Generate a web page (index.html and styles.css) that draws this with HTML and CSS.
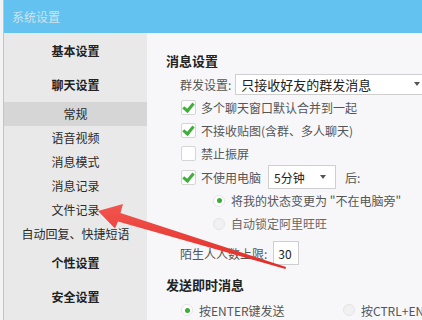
FILE: index.html
```html
<!DOCTYPE html>
<html lang="zh">
<head>
    <meta charset="UTF-8">
    <title>系统设置</title>
    <link rel="stylesheet" href="styles.css">
</head>
<body>

<div class="edge"></div>

<div class="window">
    <div class="titlebar">系统设置</div>

    <div class="main">
        <div class="sidebar">
            <div class="group">基本设置</div>
            <div class="group">聊天设置</div>
            <div class="item active">常规</div>
            <div class="item">语音视频</div>
            <div class="item">消息模式</div>
            <div class="item">消息记录</div>
            <div class="item">文件记录</div>
            <div class="item">自动回复、快捷短语</div>
            <div class="group">个性设置</div>
            <div class="group">安全设置</div>
        </div>

        <div class="content">
            <div class="heading">消息设置</div>

            <div class="row field">
                <span>群发设置:</span>
                <div class="select wide">只接收好友的群发消息<span class="caret"></span></div>
            </div>

            <div class="row check"><span class="box on"></span>多个聊天窗口默认合并到一起</div>
            <div class="row check"><span class="box on"></span>不接收贴图(含群、多人聊天)</div>
            <div class="row check"><span class="box"></span>禁止振屏</div>
            <div class="row check tall">
                <span class="box on"></span>不使用电脑
                <div class="select small">5分钟<span class="caret"></span></div>
                <span class="after">后:</span>
            </div>

            <div class="row radio sub"><span class="dot on"></span>将我的状态变更为 "不在电脑旁"</div>
            <div class="row radio sub faint"><span class="dot"></span>自动锁定阿里旺旺</div>

            <div class="row field limit">
                <span>陌生人人数上限:</span>
                <div class="input">30</div>
            </div>

            <div class="heading second">发送即时消息</div>

            <div class="row radio send">
                <span class="opt"><span class="dot on"></span>按ENTER键发送</span>
                <span class="opt"><span class="dot"></span>按CTRL+ENTER键发送</span>
            </div>
        </div>
    </div>
</div>

<svg class="arrow" width="422" height="320" viewBox="0 0 422 320">
    <defs>
        <linearGradient id="red" x1="0" y1="0" x2="0" y2="1">
            <stop offset="0" stop-color="#f2564f"/>
            <stop offset="1" stop-color="#e02c26"/>
        </linearGradient>
    </defs>
    <polygon points="98,211 123,204 120.5,213 286,267 285.5,269 118,221.5 115,228.5" fill="url(#red)"/>
</svg>

</body>
</html>
```

FILE: styles.css
```css
body {
    margin: 0;
    width: 422px;
    height: 320px;
    overflow: hidden;
    display: flex;
    position: relative;
    font-family: "Noto Sans CJK SC", "Noto Sans", sans-serif;
    font-size: 12px;
    color: #333;
    background-color: #f7f7f9;
}
.edge {
    width: 3px;
    background-color: #f3f3f3;
    border-right: 1px solid #c4c4c4;
}
.window {
    flex: 1;
    display: flex;
    flex-direction: column;
    min-width: 0;
}
.titlebar {
    height: 33px;
    line-height: 33px;
    padding-left: 8px;
    background-color: #63c2ef;
    color: #d0e3ee;
    font-size: 12px;
}
.main {
    flex: 1;
    display: flex;
    min-width: 0;
}
.sidebar {
    width: 143px;
    flex-shrink: 0;
    background-color: #e9e9e9;
    padding-top: 1px;
}
.group {
    height: 34px;
    line-height: 34px;
    text-align: center;
    font-weight: bold;
    color: #222;
}
.item {
    height: 24px;
    line-height: 24px;
    text-align: center;
    color: #2a2a2a;
}
.item.active {
    background-color: #d6d6d6;
}
.content {
    flex: 1;
    min-width: 0;
    overflow: hidden;
    padding: 17px 0 0 19px;
    color: #555;
}
.heading {
    height: 22px;
    line-height: 22px;
    font-size: 13px;
    font-weight: bold;
    color: #222;
}
.heading.second {
    margin-top: 5px;
}
.row {
    display: flex;
    align-items: center;
    height: 23px;
    white-space: nowrap;
}
.field {
    height: 24px;
    padding-left: 14px;
}
.select {
    display: flex;
    align-items: center;
    height: 21px;
    padding-left: 5px;
    background-color: #fff;
    border: 1px solid #cfcfcf;
    color: #222;
    position: relative;
    box-sizing: border-box;
    flex-shrink: 0;
}
.select.wide {
    width: 200px;
    margin-left: 4px;
    font-size: 13px;
}
.select.small {
    width: 68px;
    height: 24px;
    margin-left: 7px;
}
.caret {
    position: absolute;
    border-left: 3.5px solid transparent;
    border-right: 3.5px solid transparent;
    border-top: 4px solid #555;
}
.wide .caret {
    left: 178px;
}
.small .caret {
    left: 51px;
}
.after {
    margin-left: 9px;
}
.check {
    padding-left: 15px;
}
.check.tall {
    height: 24px;
}
.box {
    width: 13px;
    height: 13px;
    border: 1px solid #d5d5d5;
    border-radius: 2px;
    background-color: #fff;
    margin-right: 5px;
    position: relative;
    flex-shrink: 0;
}
.box.on::after {
    content: "";
    position: absolute;
    left: 3px;
    top: 0px;
    width: 4px;
    height: 8px;
    border-right: 3px solid #3fae3a;
    border-bottom: 3px solid #3fae3a;
    transform: rotate(40deg);
}
.radio.sub {
    padding-left: 47px;
}
.dot {
    width: 12px;
    height: 12px;
    border-radius: 50%;
    border: 1px solid #e4e4e4;
    background-color: #f1f1f1;
    margin-right: 6px;
    position: relative;
    flex-shrink: 0;
    box-sizing: border-box;
}
.dot.on {
    background-color: #fff;
}
.dot.on::after {
    content: "";
    position: absolute;
    left: 2.5px;
    top: 2.5px;
    width: 5px;
    height: 5px;
    border-radius: 50%;
    background-color: #3fa93a;
}
.faint {
    color: #666;
}
.limit {
    height: 32px;
    margin-top: 2px;
}
.input {
    width: 26px;
    height: 24px;
    line-height: 24px;
    margin-left: 6px;
    padding-left: 4px;
    box-sizing: border-box;
    background-color: #fff;
    border: 1px solid #cfcfcf;
    color: #222;
}
.send {
    height: 24px;
    margin-top: 2px;
    padding-left: 15px;
}
.opt {
    display: flex;
    align-items: center;
    width: 162px;
    flex-shrink: 0;
}
.arrow {
    position: absolute;
    left: 0;
    top: 0;
    pointer-events: none;
}
```
